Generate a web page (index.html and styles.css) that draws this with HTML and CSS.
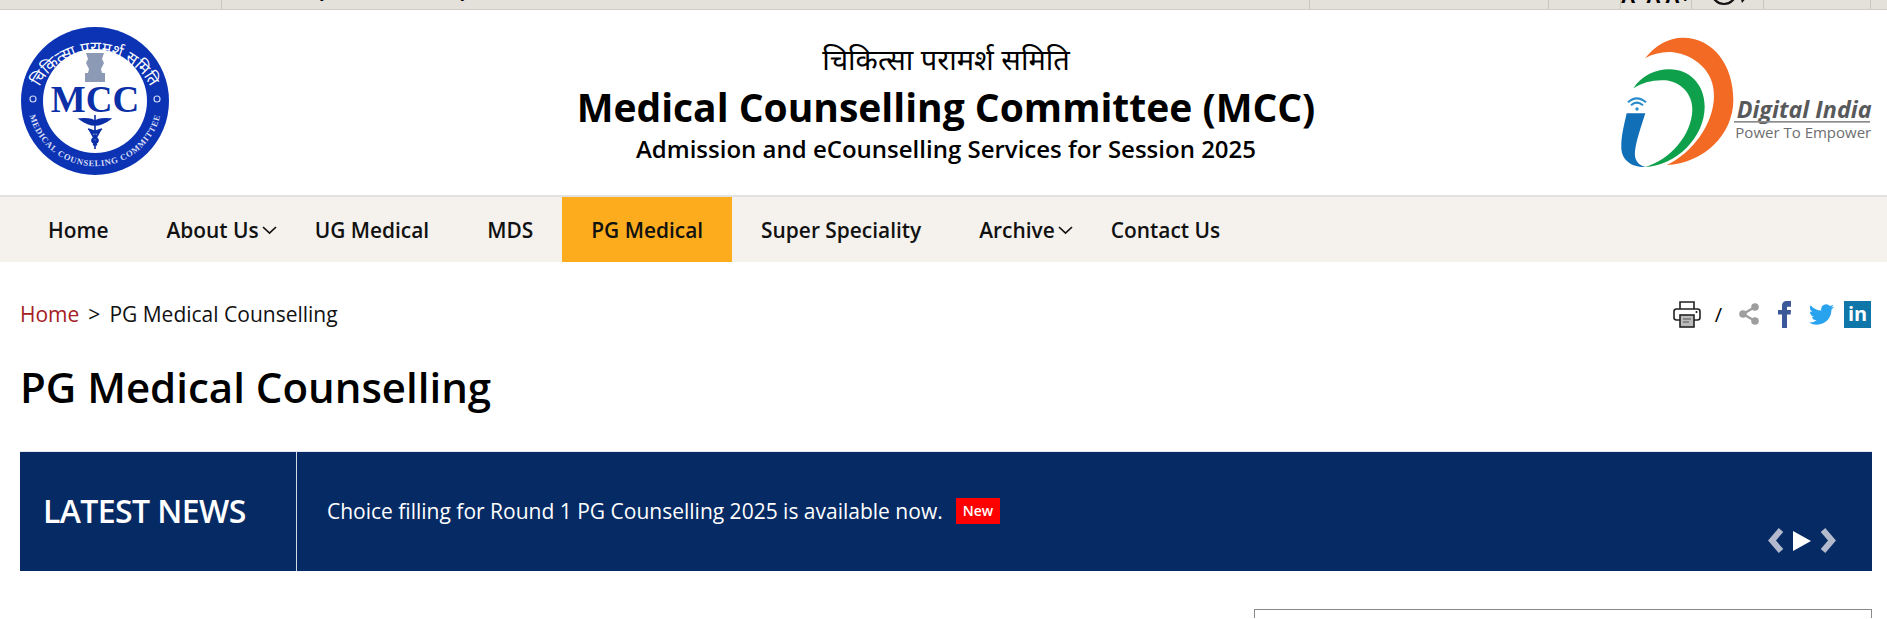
FILE: index.html
```html
<!DOCTYPE html>
<html lang="en">
<head>
<meta charset="utf-8">
<title>PG Medical Counselling</title>
<link rel="stylesheet" href="styles.css">
</head>
<body>
<div class="topbar">
  <div class="tb-cell tb-first"></div>
  <div class="tb-cell tb-ministry"><span class="tb-text">Ministry of Health &amp; Family Welfare</span></div>
  <div class="tb-cell tb-c2"></div>
  <div class="tb-cell tb-c3"></div>
  <div class="tb-cell tb-c4"><span class="tb-text tb-bold">A- A A+</span></div>
  <div class="tb-cell tb-c5">
    <svg class="tb-globe" width="46" height="9" viewBox="0 0 46 9"><circle cx="14" cy="-8" r="12" fill="none" stroke="#111" stroke-width="2.2"/><path d="M30 -4 L38 -4 L32 3 Z" fill="#111"/></svg>
  </div>
  <div class="tb-cell tb-c6"></div>
</div>

<header class="masthead">
  <div class="mast-left">
    <svg class="mcc-logo" width="150" height="148" viewBox="0 0 150 148">
      <defs>
        <path id="arcTop" d="M 13.5 80 A 62 62 0 0 1 136.5 80"/>
        <path id="arcBot" d="M 8 80 A 67.5 67.5 0 0 0 142 80"/>
      </defs>
      <circle cx="75" cy="74" r="74" fill="#0b33b4"/>
      <circle cx="75" cy="74" r="52" fill="#fff"/>
      <text class="mcc-ring-hi" fill="#fff"><textPath href="#arcTop" startOffset="50%" text-anchor="middle">चिकित्सा परामर्श समिति</textPath></text>
      <text class="mcc-ring-en" fill="#d8def5"><textPath href="#arcBot" startOffset="50%" text-anchor="middle">MEDICAL COUNSELING COMMITTEE</textPath></text>
      <circle cx="13" cy="72" r="3" fill="none" stroke="#cdd6f5" stroke-width="1.2"/>
      <circle cx="137" cy="72" r="3" fill="none" stroke="#cdd6f5" stroke-width="1.2"/>
      <path d="M66 26 h18 l-2 6 2 4 -3 6 1 4 h3 v9 h-20 v-9 h3 l1 -4 -3 -6 2 -4 z" fill="#8c9ab6"/>
      <text class="mcc-name" x="75" y="85" text-anchor="middle" fill="#0b2fa6">MCC</text>
      <path d="M75 88 v34 M60 92 q15 -1 15 4 q0 -5 15 -4 q-8 6 -15 6 q-7 0 -15 -6z M68 102 q14 4 7 8 q-7 4 2 8 M82 102 q-14 4 -7 8 q7 4 -2 8" fill="#0b2fa6" stroke="#0b2fa6" stroke-width="1.6"/>
    </svg>
  </div>
  <div class="mast-title">
    <div class="title-hi">चिकित्सा परामर्श समिति</div>
    <h2 class="title-en">Medical Counselling Committee (MCC)</h2>
    <div class="title-sub">Admission and eCounselling Services for Session 2025</div>
  </div>
  <div class="mast-right">
    <svg class="di-logo" width="277" height="150" viewBox="0 0 831 450">
      <path d="M105 100 C135 62 175 38 218 38 C310 38 370 120 370 225 C370 330 280 415 170 420 C245 385 310 300 312 215 C314 135 250 90 190 82 C160 79 130 86 105 100Z" fill="#f26a24"/>
      <path d="M70 190 C95 152 135 133 178 133 C240 133 284 180 284 245 C284 335 200 422 105 426 C180 405 245 330 247 255 C248 205 210 170 165 166 C130 164 98 172 70 190Z" fill="#0ea04b"/>
      <path d="M50 265 L106 265 C92 310 70 370 76 398 C80 412 90 422 108 426 C70 428 36 410 34 370 C33 335 42 300 50 265Z" fill="#116fb8"/>
      <path d="M54 232 Q80 208 108 232 M63 241 Q80 225 99 241" fill="none" stroke="#2a8ccb" stroke-width="6"/>
      <circle cx="81" cy="252" r="5" fill="#2a8ccb"/>
      <text class="di-name" x="380" y="278" fill="#58595b">Digital India</text>
      <rect x="372" y="288" width="408" height="5" fill="#8a8b8d"/>
      <text class="di-tag" x="376" y="340" fill="#6d6e70">Power To Empower</text>
    </svg>
  </div>
</header>

<nav class="mainnav">
  <a class="nav-item">Home</a>
  <a class="nav-item nav-drop">About Us<svg class="chev" width="17" height="10" viewBox="0 0 17 10"><path d="M2 2 L8.5 8 L15 2" fill="none" stroke="#111" stroke-width="1.7"/></svg></a>
  <a class="nav-item">UG Medical</a>
  <a class="nav-item">MDS</a>
  <a class="nav-item nav-active">PG Medical</a>
  <a class="nav-item">Super Speciality</a>
  <a class="nav-item nav-drop">Archive<svg class="chev" width="17" height="10" viewBox="0 0 17 10"><path d="M2 2 L8.5 8 L15 2" fill="none" stroke="#111" stroke-width="1.7"/></svg></a>
  <a class="nav-item">Contact Us</a>
</nav>

<main class="content">
  <div class="crumbrow">
    <div class="crumbs"><a class="crumb-home">Home</a><span class="crumb-sep">&gt;</span><span>PG Medical Counselling</span></div>
    <div class="tools">
      <svg class="ic-print" width="28" height="28" viewBox="0 0 28 28"><path d="M7 9 V2 H21 V9 M7 20 H3.5 Q1 20 1 17.5 V11.5 Q1 9 3.5 9 H24.5 Q27 9 27 11.5 V17.5 Q27 20 24.5 20 H21" fill="none" stroke="#222" stroke-width="1.6"/><rect x="7" y="15" width="14" height="12" fill="#bbb" stroke="#222" stroke-width="1.6"/><path d="M10 19 H18 M10 22 H16" stroke="#777" stroke-width="1.5"/><circle cx="23.5" cy="12" r="1" fill="#111"/></svg>
      <span class="slash">/</span>
      <svg class="ic-share" width="20" height="22" viewBox="0 0 20 22"><path d="M16 4 L4 11 L16 18" fill="none" stroke="#9e9e9e" stroke-width="2.4"/><circle cx="16" cy="4" r="3.8" fill="#9e9e9e"/><circle cx="4" cy="11" r="3.8" fill="#9e9e9e"/><circle cx="16" cy="18" r="3.8" fill="#9e9e9e"/></svg>
      <svg class="ic-fb" width="16" height="27" viewBox="4 0 16 24" preserveAspectRatio="none"><path d="M9 8H5v4h4v12h5V12h3.642L18 8h-4V6.333C14 5.378 14.192 5 15.115 5H18V0h-3.808C10.596 0 9 1.583 9 4.615V8z" fill="#3b5998"/></svg>
      <svg class="ic-tw" width="25" height="21" viewBox="0 2 24 20" preserveAspectRatio="none"><path d="M23.953 4.57a10 10 0 01-2.825.775 4.958 4.958 0 002.163-2.723c-.951.555-2.005.959-3.127 1.184a4.92 4.92 0 00-8.384 4.482C7.69 8.095 4.067 6.13 1.64 3.162a4.822 4.822 0 00-.666 2.475c0 1.71.87 3.213 2.188 4.096a4.904 4.904 0 01-2.228-.616v.06a4.923 4.923 0 003.946 4.827 4.996 4.996 0 01-2.212.085 4.936 4.936 0 004.604 3.417 9.867 9.867 0 01-6.102 2.105c-.39 0-.779-.023-1.17-.067a13.995 13.995 0 007.557 2.209c9.053 0 13.998-7.496 13.998-13.985 0-.21 0-.42-.015-.63A9.935 9.935 0 0024 4.59z" fill="#2aa3ef"/></svg>
      <span class="ic-in">in</span>
    </div>
  </div>
  <h1 class="pagetitle">PG Medical Counselling</h1>
  <section class="newsbar">
    <div class="news-label">LATEST NEWS</div>
    <div class="news-body">
      <div class="news-msg">Choice filling for Round 1 PG Counselling 2025 is available now.<span class="badge">New</span></div>
      <div class="news-ctrl">
        <svg width="18" height="27" viewBox="0 0 18 27"><path d="M14 3 L5 13.5 L14 24" fill="none" stroke="#b3bacd" stroke-width="6"/></svg>
        <svg width="18" height="20" viewBox="0 0 18 20"><path d="M0 0 L18 10 L0 20Z" fill="#fff"/></svg>
        <svg width="18" height="27" viewBox="0 0 18 27"><path d="M4 3 L13 13.5 L4 24" fill="none" stroke="#b3bacd" stroke-width="6"/></svg>
      </div>
    </div>
  </section>
  <div class="lowerbox"></div>
</main>
</body>
</html>
```

FILE: styles.css
```css
* { box-sizing: border-box; }
html, body { margin: 0; padding: 0; }
body {
  height: 619px;
  overflow: hidden;
  background: #fff;
  color: #000;
  font-family: "Open Sans", "Noto Sans", sans-serif;
}

.topbar {
  display: flex;
  height: 10px;
  overflow: hidden;
  background: #e4e0da;
  border-bottom: 1px solid #cfccc6;
}
.tb-cell { height: 9px; overflow: hidden; border-right: 1px solid #c9c6c0; flex: none; }
.tb-first { width: 222px; }
.tb-ministry { width: 1088px; padding-left: 46px; }
.tb-c2 { width: 239px; }
.tb-c3 { width: 72px; }
.tb-c4 { width: 71px; text-align: center; }
.tb-c5 { width: 72px; padding-left: 18px; }
.tb-c6 { width: 107px; }
.tb-text {
  display: block;
  font-size: 16px;
  line-height: 20px;
  margin-top: -19px;
  white-space: nowrap;
}
.tb-bold { font-size: 20px; font-weight: 700; margin-top: -14px; }
.tb-globe { display: block; }

.masthead {
  display: grid;
  grid-template-columns: 1fr auto 1fr;
  height: 187px;
  border-bottom: 2px solid #e2e2e2;
}
.mast-left { padding: 17px 0 0 20px; }
.mcc-logo { display: block; }
.mcc-ring-hi { font-family: "Noto Sans", "Liberation Serif", serif; font-size: 16px; }
.mcc-ring-en { font-family: "Liberation Serif", serif; font-size: 8.6px; font-weight: 700; letter-spacing: .7px; }
.mcc-name { font-family: "Liberation Serif", serif; font-size: 37px; font-weight: 700; }
.mast-right { display: flex; justify-content: flex-end; padding-top: 15px; }
.di-logo { display: block; }
.di-name { font-family: "Open Sans", sans-serif; font-size: 70px; font-weight: 700; font-style: italic; }
.di-tag { font-family: "Open Sans", sans-serif; font-size: 45px; }

.mast-title { text-align: center; padding: 27px 0 0 5px; }
.title-hi { font-size: 29px; line-height: 44px; font-family: "Noto Sans", "Liberation Serif", serif; }
.title-en { margin: 0; font-size: 39px; line-height: 52px; font-weight: 700; white-space: nowrap; }
.title-sub { font-size: 24px; line-height: 30px; font-weight: 600; margin-top: 1px; }

.mainnav {
  display: flex;
  height: 65px;
  padding-left: 19px;
  background: #f5f2ee;
}
.nav-item {
  display: flex;
  align-items: center;
  padding: 0 29px;
  font-size: 20.9px;
  font-weight: 600;
  color: #111;
  white-space: nowrap;
}
.nav-drop { padding-right: 8px; }
.nav-active { background: #fdac1d; }
.chev { margin-left: 2px; margin-top: 1px; }

.content { padding: 0 15px 0 20px; }
.crumbrow {
  display: flex;
  justify-content: space-between;
  align-items: center;
  height: 28px;
  margin-top: 38px;
}
.crumbs { font-size: 21px; line-height: 28px; color: #111; white-space: nowrap; }
.crumb-home { color: #a5201f; }
.crumb-sep { margin: 0 9px; }
.tools { display: flex; align-items: center; margin-right: 1px; }
.ic-print { margin-right: 14px; }
.slash { font-size: 20px; margin-right: 17px; }
.ic-share { margin-right: 18px; }
.ic-fb { margin-right: 16px; }
.ic-tw { margin-right: 10px; }
.ic-in {
  display: flex;
  align-items: center;
  justify-content: center;
  width: 27px;
  height: 27px;
  background: #0e76a8;
  color: #fff;
  font-size: 20px;
  font-weight: 700;
  line-height: 1;
}
.pagetitle {
  margin: 29px 0 0;
  font-size: 42px;
  line-height: 60px;
  font-weight: 600;
}

.newsbar {
  display: flex;
  height: 120px;
  margin-top: 34px;
  background: #052a64;
  color: #fff;
  border-top: 1px solid #e6e9f0;
}
.news-label {
  flex: none;
  width: 277px;
  padding-left: 23px;
  border-right: 1px solid #cfd6e4;
  font-size: 32px;
  font-weight: 600;
  letter-spacing: -.6px;
  line-height: 118px;
}
.news-body {
  flex: 1;
  display: flex;
  flex-direction: column;
  justify-content: space-between;
  padding: 46px 35px 17px 30px;
}
.news-msg { display: flex; align-items: center; font-size: 21px; line-height: 26px; }
.badge {
  margin-left: 13px;
  padding: 0 7px;
  height: 26px;
  background: #f00;
  font-size: 14px;
  font-weight: 600;
  line-height: 26px;
}
.news-ctrl { display: flex; align-items: center; justify-content: flex-end; gap: 8px; }

.lowerbox {
  width: 618px;
  height: 9px;
  margin: 38px 0 0 auto;
  border: 1px solid #8a8a8a;
  border-bottom: 0;
}
```
